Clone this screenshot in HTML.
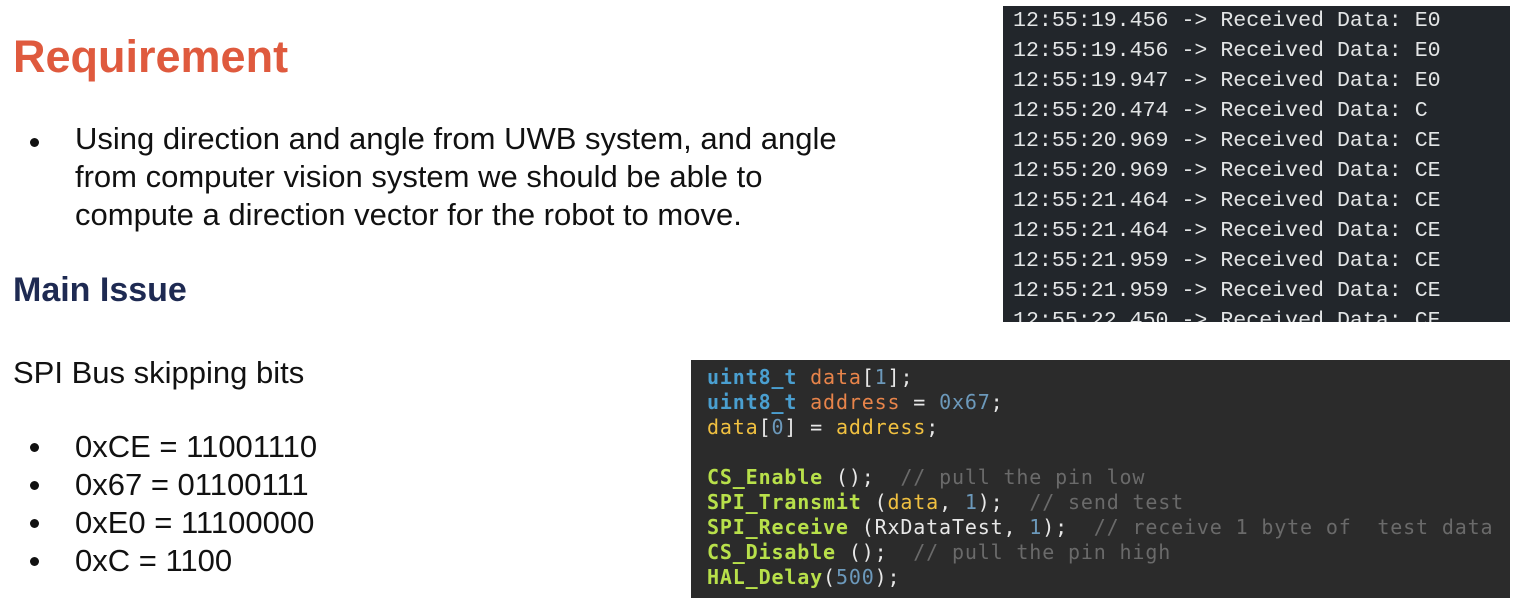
<!DOCTYPE html>
<html><head><style>
body{margin:0;width:1514px;height:602px;background:#fff;position:relative;overflow:hidden;font-family:"Liberation Sans",Arial,sans-serif;}
.a{position:absolute;white-space:nowrap;}
.h1{color:#df5a3e;font-weight:bold;font-size:45px;}
.h2{color:#1e2a52;font-weight:bold;font-size:34px;}
.t{font-size:31px;color:#111;line-height:38px;}
.dot{position:absolute;width:9px;height:9px;border-radius:50%;background:#111;}
#term{position:absolute;left:1003px;top:6px;width:507px;height:316px;background:#22262b;overflow:hidden;}
#term pre{margin:0;position:absolute;left:10px;top:0px;font-family:"Liberation Mono","DejaVu Sans Mono",monospace;font-size:21.6px;line-height:30px;color:#e3e5e6;}
#code{position:absolute;left:691px;top:360px;width:819px;height:238px;background:#2b2b2b;overflow:hidden;}
#code pre{margin:0;position:absolute;left:16px;top:5px;font-family:"DejaVu Sans Mono","Liberation Mono",monospace;font-size:20px;letter-spacing:0.85px;line-height:25px;color:#e8e8e8;}
.k{color:#4a9fd0;font-weight:bold}.v{color:#e8844a}.n{color:#6c99bb}.y{color:#f0c040}.g{color:#b8e04a;font-weight:bold}.c{color:#6a6a6a}
</style></head><body>
<div class="a h1" style="left:13px;top:31px;">Requirement</div>
<div class="dot" style="left:30px;top:138px"></div>
<div class="a t" style="left:75px;top:120px;">Using direction and angle from UWB system, and angle<br>from computer vision system we should be able to<br>compute a direction vector for the robot to move.</div>
<div class="a h2" style="left:13px;top:271px;">Main Issue</div>
<div class="a t" style="left:13px;top:354px;">SPI Bus skipping bits</div>
<div class="dot" style="left:30px;top:443px"></div>
<div class="dot" style="left:30px;top:481px"></div>
<div class="dot" style="left:30px;top:519px"></div>
<div class="dot" style="left:30px;top:557px"></div>
<div class="a t" style="left:75px;top:428px;">0xCE = 11001110<br>0x67 = 01100111<br>0xE0 = 11100000<br>0xC = 1100</div>
<div id="term"><pre>12:55:19.456 -> Received Data: E0
12:55:19.456 -> Received Data: E0
12:55:19.947 -> Received Data: E0
12:55:20.474 -> Received Data: C
12:55:20.969 -> Received Data: CE
12:55:20.969 -> Received Data: CE
12:55:21.464 -> Received Data: CE
12:55:21.464 -> Received Data: CE
12:55:21.959 -> Received Data: CE
12:55:21.959 -> Received Data: CE
12:55:22.450 -> Received Data: CE</pre></div>
<div id="code"><pre><span class="k">uint8_t</span> <span class="v">data</span>[<span class="n">1</span>];
<span class="k">uint8_t</span> <span class="v">address</span> = <span class="n">0x67</span>;
<span class="y">data</span>[<span class="n">0</span>] = <span class="y">address</span>;

<span class="g">CS_Enable</span> ();  <span class="c">// pull the pin low</span>
<span class="g">SPI_Transmit</span> (<span class="y">data</span>, <span class="n">1</span>);  <span class="c">// send test</span>
<span class="g">SPI_Receive</span> (RxDataTest, <span class="n">1</span>);  <span class="c">// receive 1 byte of  test data</span>
<span class="g">CS_Disable</span> ();  <span class="c">// pull the pin high</span>
<span class="g">HAL_Delay</span>(<span class="n">500</span>);</pre></div>
</body></html>
